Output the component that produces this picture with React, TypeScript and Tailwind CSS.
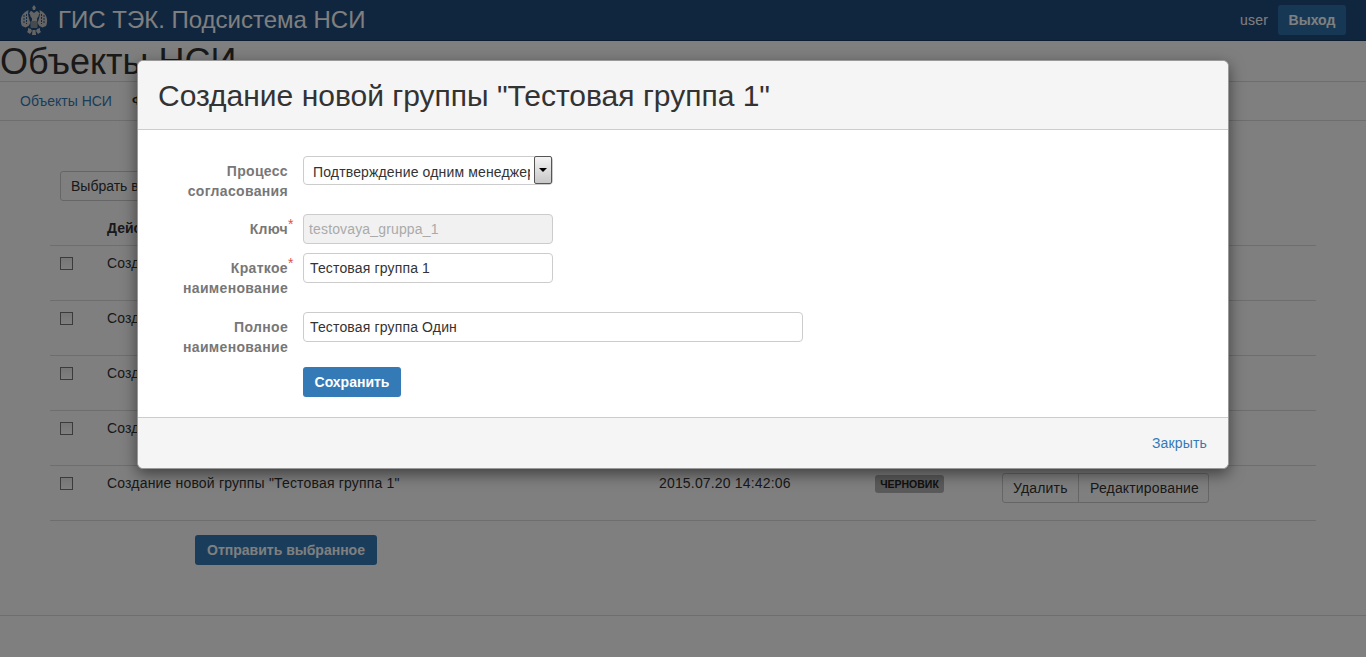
const font = "font-['Liberation_Sans',Arial,sans-serif]";

const title = "Создание новой группы \"Тестовая группа 1\"";
const rows = [title, title, title, title, title];

function Eagle() {
  return (
    <svg width="28" height="31" viewBox="0 0 28 31" fill="#c8c8c8">
      <path d="M14 0l1.800 2.500-.800 2.500h-2l-.800-2.500z" />
      <path d="M11.500 6c-1.300 0-2 1-1.800 2.200l-1.200.3 1.500.8.500 2.200 1.500 2-.200 3h5.400l-.200-3 1.500-2 .500-2.200 1.500-.8-1.200-.3C18.500 7 17.800 6 16.500 6L14 8z" />
      <path d="M8.500 5C5 6.500 1.500 9.500 1 14c-.300 2.500 0 5 1 7l3.500 1.500 3-1.500 2-3-1-3-1-3.500-.500-3z" />
      <path d="M19.500 5c3.500 1.500 7 4.500 7.500 9 .300 2.500 0 5-1 7l-3.500 1.500-3-1.500-2-3 1-3 1-3.500.500-3z" />
      <path d="M4 10v9M6.500 9v10M21.500 9v10M24 10v9" stroke="#24558a" strokeWidth="1" strokeDasharray="2 1" />
      <rect x="10.500" y="16" width="7" height="7" rx="1" fill="#8d96a0" />
      <path d="M8 23l3 1 1 2-2 3-3-2 1-1.500zM20 23l-3 1-1 2 2 3 3-2-1-1.500z" />
      <path d="M12.500 25h3l.500 5h-4z" />
    </svg>
  );
}

function Row({ title }: { title: string }) {
  return (
    <div className="flex h-[55px] border-b border-[#ddd] text-sm leading-5 tracking-[0.17px] text-[#333]">
      <div className="w-[57px] pt-[11px] pl-[10px]">
        <div className="h-[13px] w-[13px] border border-[#767676] bg-gradient-to-b from-[#ededed] to-white" />
      </div>
      <div className="w-[552px] pt-[7px]">{title}</div>
      <div className="w-[216px] pt-[7px]">2015.07.20 14:42:06</div>
      <div className="w-[127px] pt-[9px]">
        <span className="block h-[18px] w-[69px] rounded-[3px] bg-[#b5b5b5] text-center text-[10.500px] font-bold tracking-normal leading-[18px] text-[#222]">
          ЧЕРНОВИК
        </span>
      </div>
      <div className="pt-[7px]">
        <div className="flex h-[30px] w-[207px] rounded-[3px] border border-[#ccc] bg-white leading-[28px]">
          <span className="w-[76px] border-r border-[#ccc] pl-[10px]">Удалить</span>
          <span className="pl-[11px]">Редактирование</span>
        </div>
      </div>
    </div>
  );
}

function Page() {
  return (
    <div className="h-[657px] overflow-hidden bg-white">
      <header className="flex h-[41px] items-center justify-between border-b border-[#1a3a60] bg-[#204c7e] pr-5 pl-5">
        <div className="flex items-center">
          <Eagle />
          <span className="ml-[10px] text-2xl leading-none text-white">ГИС ТЭК. Подсистема НСИ</span>
        </div>
        <div className="flex items-center">
          <span className="mr-[10px] text-sm tracking-[0.17px] text-white">user</span>
          <span className="flex h-[30px] w-[68px] items-center justify-center rounded-[3px] bg-[#2f70aa] text-sm font-bold text-white">
            Выход
          </span>
        </div>
      </header>
      <h1 className="h-[41px] border-b border-[#ddd] text-4xl leading-[41px] text-[#333]">Объекты НСИ</h1>
      <nav className="flex h-[39px] items-center border-b border-[#ddd] pl-5 text-[13px]">
        <span className="text-sm text-[#337ab7]">Объекты НСИ</span>
        <span className="ml-5 font-bold text-[#333]">Ф</span>
      </nav>
      <div className="mx-[50px] mt-[50px]">
        <div className="ml-[10px] flex h-[30px] w-[110px] items-center rounded-[3px] border border-[#ccc] bg-white px-[10px] text-sm text-[#333]">
          Выбрать все
        </div>
        <div className="mt-[17px] flex h-[28px] border-b border-[#ddd] pl-[57px] text-sm font-bold text-[#333]">
          Действие
        </div>
        {rows.map((t, i) => (
          <Row key={i} title={t} />
        ))}
        <div className="mt-[14px] ml-[145px] flex h-[30px] w-[182px] items-center justify-center rounded-[3px] bg-[#337ab7] text-sm font-bold text-white">
          Отправить выбранное
        </div>
      </div>
      <div className="mt-[50px] border-t border-[#ddd]" />
    </div>
  );
}

function Field({ label, required, children }: { label: React.ReactNode; required?: boolean; children: React.ReactNode }) {
  return (
    <div className="flex">
      <label className="relative w-[150px] pt-[5px] text-right text-sm leading-5 font-bold tracking-[0.33px] text-[#777]">
        {label}
        {required && <span className="absolute top-[3px] left-full text-sm leading-[14px] font-normal text-[#d9534f]">*</span>}
      </label>
      <div className="ml-[15px]">{children}</div>
    </div>
  );
}

function Modal() {
  return (
    <div className="absolute top-[60px] left-[137px] h-[409px] w-[1092px] rounded-md border border-[#999] bg-white shadow-[0_5px_15px_rgba(0,0,0,0.5)]">
      <div className="flex h-[69px] items-center rounded-t-md border-b border-[#ccc] bg-[#f5f5f5] pt-[2px] pl-5 text-[30px] leading-none text-[#333]">
        Создание новой группы "Тестовая группа 1"
      </div>
      <div className="h-[288px] border-b border-[#ccc] pt-[26px] text-sm tracking-[0.15px]">
        <Field label={<>Процесс<br />согласования</>}>
          <div className="flex h-[29px] w-[250px] items-start rounded-[4px] border border-[#ccc] bg-white">
            <span className="mt-[5px] ml-[9px] w-[218px] overflow-hidden leading-5 whitespace-nowrap text-[#333]">
              Подтверждение одним менеджером
            </span>
            <span className="mt-[-1px] ml-[4px] flex h-[28px] w-[18px] shrink-0 items-center justify-center rounded-[2px] border border-[#555] bg-gradient-to-b from-[#f4f4f4] to-[#c8c8c8]">
              <span className="h-0 w-0 border-x-[4px] border-t-[4px] border-x-transparent border-t-black" />
            </span>
          </div>
        </Field>
        <div className="mt-[13px]">
          <Field label="Ключ" required>
            <div className="flex h-[30px] w-[250px] items-center rounded-[4px] border border-[#ccc] bg-[#f1f1f1] px-[5px] text-[#aaa]">
              testovaya_gruppa_1
            </div>
          </Field>
        </div>
        <div className="mt-[9px]">
          <Field label={<>Краткое<br />наименование</>} required>
            <div className="flex h-[30px] w-[250px] items-center rounded-[4px] border border-[#ccc] px-[6px] text-[#333]">
              Тестовая группа 1
            </div>
          </Field>
        </div>
        <div className="mt-[14px]">
          <Field label={<>Полное<br />наименование</>}>
            <div className="flex h-[30px] w-[500px] items-center rounded-[4px] border border-[#ccc] px-[6px] text-[#333]">
              Тестовая группа Один
            </div>
          </Field>
        </div>
        <div className="mt-[10px] ml-[165px] flex h-[30px] w-[98px] items-center justify-center rounded-[3px] bg-[#337ab7] font-bold tracking-normal text-white">
          Сохранить
        </div>
      </div>
      <div className="flex h-[50px] items-end justify-end rounded-b-md bg-[#f5f5f5] pr-[21px] pb-[15px] text-sm leading-5 tracking-[0.17px] text-[#337ab7]">
        Закрыть
      </div>
    </div>
  );
}

export default function App() {
  return (
    <div className={`relative h-[657px] overflow-hidden ${font}`}>
      <Page />
      <div className="absolute inset-0 bg-black/50" />
      <Modal />
    </div>
  );
}
